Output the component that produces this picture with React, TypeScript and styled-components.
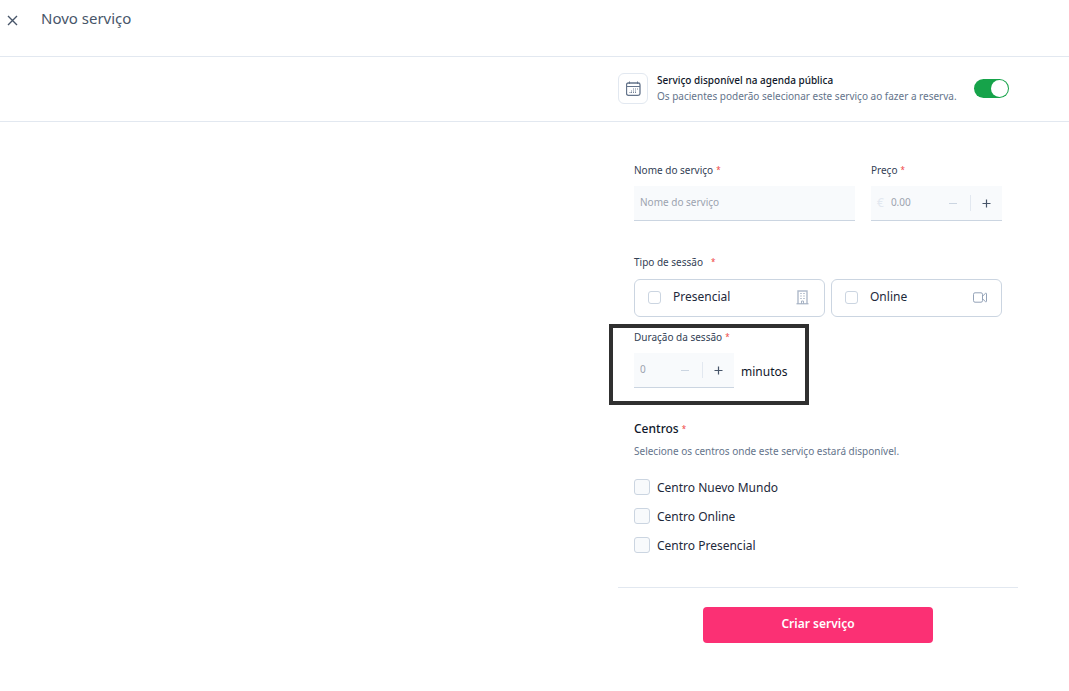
import React from 'react';
import styled, { createGlobalStyle, css } from 'styled-components';

const color = {
  line: '#e2e8f0',
  control: '#cbd5e1',
  fill: '#f8fafc',
  heading: '#475569',
  strong: '#0f172a',
  text: '#1e293b',
  label: '#334155',
  muted: '#64748b',
  placeholder: '#9ca3af',
  required: '#ef4444',
  accent: '#fb3074',
  success: '#16a34a',
};

const GlobalStyle = createGlobalStyle`
  *, *::before, *::after { box-sizing: border-box; }
  body {
    margin: 0;
    background: #fff;
    color: ${color.text};
    font-family: 'Noto Sans', 'Open Sans', sans-serif;
    font-size: 12px;
    line-height: 16px;
  }
  button, input { font: inherit; color: inherit; margin: 0; }
`;

const Header = styled.header`
  display: flex;
  align-items: flex-start;
  gap: 16px;
  min-height: 57px;
  padding: 7px 0;
  border-bottom: 1px solid ${color.line};
`;

const IconButton = styled.button`
  display: grid;
  place-items: center;
  width: 25px;
  height: 26px;
  padding: 0;
  border: 0;
  background: none;
  color: ${color.heading};
`;

const Title = styled.h1`
  margin: 0;
  color: ${color.heading};
  font-size: 15px;
  font-weight: 400;
  line-height: 22px;
`;

const Availability = styled.section`
  border-bottom: 1px solid ${color.line};
`;

const Column = styled.div`
  width: 400px;
  max-width: 100%;
  margin-left: auto;
  margin-right: 51px;
`;

const AvailabilityRow = styled(Column)`
  display: flex;
  align-items: center;
  gap: 9px;
  min-height: 64px;
  padding: 0 9px 2px 0;
`;

const IconTile = styled.span`
  display: grid;
  place-items: center;
  flex: none;
  width: 30px;
  height: 31px;
  border: 1px solid ${color.line};
  border-radius: 6px;
  color: ${color.muted};
`;

const AvailabilityText = styled.label`
  flex: 1;
  color: ${color.muted};
  font-size: 10px;
  white-space: nowrap;
`;

const AvailabilityTitle = styled.span`
  display: block;
  color: ${color.strong};
  font-weight: 500;
`;

const Switch = styled.input`
  appearance: none;
  flex: none;
  width: 35px;
  height: 19px;
  padding: 1px;
  border-radius: 10px;
  background: ${color.control};
  &::before {
    content: '';
    display: block;
    width: 17px;
    height: 17px;
    border-radius: 50%;
    background: #fff;
  }
  &:checked { background: ${color.success}; }
  &:checked::before { margin-left: auto; }
`;

const Form = styled.form`
  padding-top: 40px;
`;

const Fields = styled.div`
  padding: 0 16px 33px;
`;

const FieldRow = styled.div`
  display: grid;
  grid-template-columns: 1fr 131px;
  gap: 16px;
  margin-bottom: 33px;
`;

const labelText = css`
  display: block;
  margin-bottom: 8px;
  padding: 0;
  color: ${color.label};
  font-size: 10px;
  line-height: 16px;
`;

const Label = styled.label`
  ${labelText}
`;

const Group = styled.fieldset`
  min-width: 0;
  margin: 0;
  padding: 0;
  border: 0;
`;

const Legend = styled.legend`
  ${labelText}
  margin-bottom: 9px;
`;

const Required = styled.span<{ $gap?: number }>`
  margin-left: ${({ $gap = 3 }) => $gap}px;
  color: ${color.required};
  font-size: 8px;
  font-weight: 400;
  line-height: 8px;
  vertical-align: 1px;
`;

const TextInput = styled.input`
  display: block;
  width: 100%;
  height: 35px;
  padding: 0 6px 2px;
  border: 0;
  border-bottom: 1px solid ${color.control};
  background: ${color.fill};
  font-size: 10px;
  outline: none;
  &::placeholder { color: ${color.placeholder}; opacity: 1; }
`;

const Stepper = styled.div`
  display: flex;
  align-items: center;
  height: 35px;
  border-bottom: 1px solid ${color.control};
  background: ${color.fill};
`;

const Currency = styled.span`
  padding: 0 1px 0 6px;
  color: ${color.line};
  font-size: 12px;
`;

const StepperInput = styled(TextInput)`
  flex: 1;
  width: auto;
  min-width: 0;
  height: 34px;
  border: 0;
  background: none;
`;

const StepButton = styled.button<{ $divided?: boolean }>`
  display: grid;
  place-items: center;
  flex: none;
  width: ${({ $divided }) => ($divided ? 32 : 34)}px;
  height: 16px;
  padding: 0;
  border: 0;
  border-left: ${({ $divided }) => ($divided ? `1px solid ${color.line}` : '0')};
  background: none;
  color: ${color.heading};
  &:disabled { color: ${color.control}; }
`;

const Choices = styled.div`
  display: grid;
  grid-template-columns: 191fr 171fr;
  gap: 6px;
  margin-bottom: 12px;
`;

const Choice = styled.label`
  display: flex;
  align-items: center;
  gap: 12px;
  height: 38px;
  padding: 0 14px 1px 13px;
  border: 1px solid ${color.control};
  border-radius: 6px;
  color: ${color.text};
  font-size: 12px;
  svg { margin-left: auto; color: #94a3b8; }
`;

const ChoiceText = styled.span`
  padding-bottom: 1px;
`;

const Checkbox = styled.input<{ $size: number }>`
  appearance: none;
  flex: none;
  width: ${({ $size }) => $size}px;
  height: ${({ $size }) => $size}px;
  border: 1px solid ${color.control};
  border-radius: 3px;
  background: ${({ $size }) => ($size > 13 ? color.fill : '#fff')};
  &:checked { background: ${color.success}; }
`;

const Highlighted = styled.div`
  position: relative;
  width: fit-content;
  margin-bottom: 32px;
  &::after {
    content: '';
    position: absolute;
    inset: -5px -21px -17px -25px;
    border: 4px solid #303030;
    pointer-events: none;
  }
`;

const Duration = styled.div`
  display: grid;
  grid-template-columns: 100px auto;
  align-items: center;
  gap: 7px;
  color: ${color.strong};
  font-size: 12px;
`;

const Unit = styled.span`
  padding-top: 2px;
`;

const SectionTitle = styled.legend`
  margin-bottom: 5px;
  padding: 0;
  color: ${color.strong};
  font-size: 12px;
  font-weight: 500;
  line-height: 18px;
`;

const Hint = styled.p`
  margin: 0 0 19px;
  color: ${color.muted};
  font-size: 10px;
`;

const CheckList = styled.ul`
  display: grid;
  gap: 11px;
  margin: 0;
  padding: 0;
  list-style: none;
`;

const CheckRow = styled.label`
  display: flex;
  align-items: center;
  gap: 7px;
  width: fit-content;
  font-size: 12px;
`;

const CheckText = styled.span`
  padding-top: 2px;
`;

const Actions = styled.footer`
  display: flex;
  justify-content: center;
  padding: 19px 0 48px;
  border-top: 1px solid ${color.line};
`;

const Submit = styled.button`
  width: 230px;
  height: 36px;
  padding: 0 0 2px;
  border: 0;
  border-radius: 4px;
  background: ${color.accent};
  color: #fff;
  font-size: 12px;
  font-weight: 600;
`;

const CloseIcon = () => (
  <svg width="11" height="11" viewBox="0 0 11 11" fill="none" stroke="currentColor" strokeWidth="1.4" aria-hidden="true">
    <path d="M1 1l9 9M10 1l-9 9" />
  </svg>
);

const CalendarIcon = () => (
  <svg width="15" height="15" viewBox="0 0 15 15" fill="none" stroke="currentColor" aria-hidden="true">
    <rect x="0.5" y="2" width="13.5" height="12.3" rx="1.8" strokeWidth="1.3" />
    <path d="M0.5 5.5h13.5" />
    <path d="M3.5 0.5v2.5M11.5 0.5v2.5" />
    <path d="M7 8h1M9 8h1M11 8h1M5 10h1M7 10h1M9 10h1M3.5 11.5h1M5 11.5h1M7 11.5h1M9 11.5h1" strokeWidth="0.9" />
  </svg>
);

const BuildingIcon = () => (
  <svg width="14" height="15" viewBox="0 0 14 15" fill="none" stroke="currentColor" aria-hidden="true">
    <path d="M2 13.5V1h9v12.5" strokeWidth="1.4" strokeOpacity="0.75" />
    <path d="M0.5 13.8h12" />
    <path d="M5.5 13.5v-2.5h2v2.5" strokeOpacity="0.8" />
    <path d="M4.4 3.5h1.2M7.4 3.5h1.2M4.4 6h1.2M7.4 6h1.2M4.4 8.5h1.2M7.4 8.5h1.2" />
  </svg>
);

const VideoIcon = () => (
  <svg width="14" height="11" viewBox="0 0 14 11" fill="none" stroke="currentColor" aria-hidden="true">
    <rect x="0.5" y="0.8" width="9" height="9.4" rx="1.5" />
    <path d="M9.5 4.2l3-2.9q1-.5 1 .5v7.4q0 1-1 .5L9.5 6.8" />
  </svg>
);

const MinusIcon = () => (
  <svg width="9" height="9" viewBox="0 0 9 9" stroke="currentColor" aria-hidden="true">
    <path d="M0 4.5h8" />
  </svg>
);

const PlusIcon = () => (
  <svg width="9" height="9" viewBox="0 0 9 9" stroke="currentColor" strokeWidth="1.2" aria-hidden="true">
    <path d="M0.5 4.5h8M4.5 0.5v8" />
  </svg>
);

const StepButtons = ({ name }: { name: string }) => (
  <>
    <StepButton type="button" disabled aria-label={`Diminuir ${name}`}>
      <MinusIcon />
    </StepButton>
    <StepButton type="button" $divided aria-label={`Aumentar ${name}`}>
      <PlusIcon />
    </StepButton>
  </>
);

const centers = ['Centro Nuevo Mundo', 'Centro Online', 'Centro Presencial'];

export default function App() {
  return (
    <>
      <GlobalStyle />
      <Header>
        <IconButton type="button" aria-label="Fechar">
          <CloseIcon />
        </IconButton>
        <Title>Novo serviço</Title>
      </Header>
      <main>
        <Availability>
          <AvailabilityRow>
            <IconTile>
              <CalendarIcon />
            </IconTile>
            <AvailabilityText htmlFor="public">
              <AvailabilityTitle>Serviço disponível na agenda pública</AvailabilityTitle>
              Os pacientes poderão selecionar este serviço ao fazer a reserva.
            </AvailabilityText>
            <Switch id="public" type="checkbox" role="switch" defaultChecked />
          </AvailabilityRow>
        </Availability>
        <Column>
          <Form onSubmit={(e) => e.preventDefault()}>
            <Fields>
              <FieldRow>
                <div>
                  <Label htmlFor="name">
                    Nome do serviço<Required>*</Required>
                  </Label>
                  <TextInput id="name" type="text" placeholder="Nome do serviço" />
                </div>
                <div>
                  <Label htmlFor="price">
                    Preço<Required>*</Required>
                  </Label>
                  <Stepper>
                    <Currency>€</Currency>
                    <StepperInput id="price" type="text" inputMode="decimal" placeholder="0.00" />
                    <StepButtons name="preço" />
                  </Stepper>
                </div>
              </FieldRow>
              <Group>
                <Legend>
                  Tipo de sessão<Required $gap={8}>*</Required>
                </Legend>
                <Choices>
                  <Choice>
                    <Checkbox type="checkbox" $size={13} />
                    <ChoiceText>Presencial</ChoiceText>
                    <BuildingIcon />
                  </Choice>
                  <Choice>
                    <Checkbox type="checkbox" $size={13} />
                    <ChoiceText>Online</ChoiceText>
                    <VideoIcon />
                  </Choice>
                </Choices>
              </Group>
              <Highlighted>
                <Label htmlFor="duration">
                  Duração da sessão<Required>*</Required>
                </Label>
                <Duration>
                  <Stepper>
                    <StepperInput id="duration" type="text" inputMode="numeric" placeholder="0" />
                    <StepButtons name="duração" />
                  </Stepper>
                  <Unit>minutos</Unit>
                </Duration>
              </Highlighted>
              <Group>
                <SectionTitle>
                  Centros<Required>*</Required>
                </SectionTitle>
                <Hint>Selecione os centros onde este serviço estará disponível.</Hint>
                <CheckList>
                  {centers.map((center) => (
                    <li key={center}>
                      <CheckRow>
                        <Checkbox type="checkbox" $size={16} />
                        <CheckText>{center}</CheckText>
                      </CheckRow>
                    </li>
                  ))}
                </CheckList>
              </Group>
            </Fields>
            <Actions>
              <Submit type="submit">Criar serviço</Submit>
            </Actions>
          </Form>
        </Column>
      </main>
    </>
  );
}
